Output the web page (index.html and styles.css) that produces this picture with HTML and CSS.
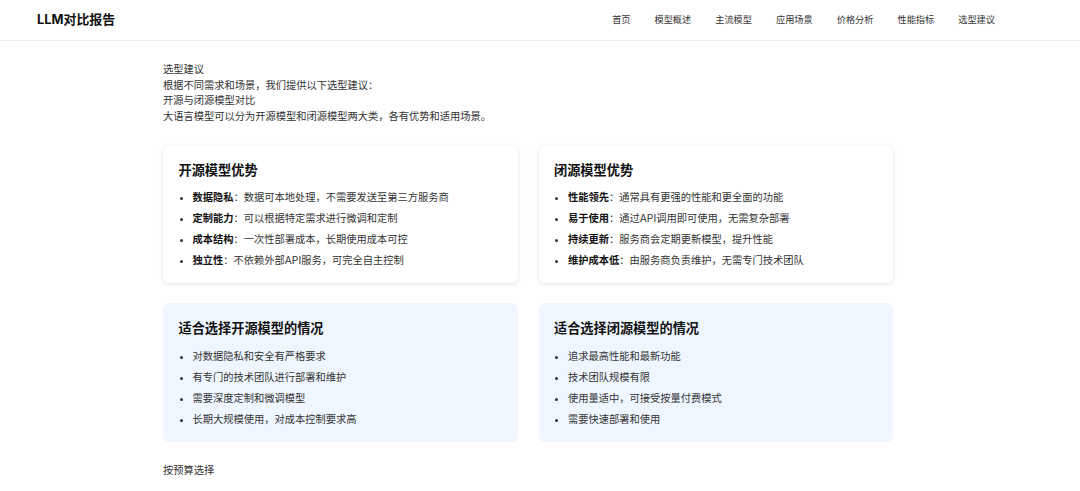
FILE: index.html
```html
<!DOCTYPE html>
<html lang="zh-CN">
<head>
<meta charset="utf-8">
<title>LLM对比报告</title>
<link rel="stylesheet" href="styles.css">
</head>
<body>
<header class="header">
  <div class="logo">LLM对比报告</div>
  <nav class="nav">
    <a href="#">首页</a>
    <a href="#">模型概述</a>
    <a href="#">主流模型</a>
    <a href="#">应用场景</a>
    <a href="#">价格分析</a>
    <a href="#">性能指标</a>
    <a href="#">选型建议</a>
  </nav>
</header>
<main class="main">
  <div class="intro">
    <p>选型建议</p>
    <p>根据不同需求和场景，我们提供以下选型建议：</p>
    <p>开源与闭源模型对比</p>
    <p>大语言模型可以分为开源模型和闭源模型两大类，各有优势和适用场景。</p>
  </div>
  <div class="grid">
    <section class="card">
      <h3 class="card-title">开源模型优势</h3>
      <ul class="list">
        <li><strong>数据隐私</strong>：数据可本地处理，不需要发送至第三方服务商</li>
        <li><strong>定制能力</strong>：可以根据特定需求进行微调和定制</li>
        <li><strong>成本结构</strong>：一次性部署成本，长期使用成本可控</li>
        <li><strong>独立性</strong>：不依赖外部API服务，可完全自主控制</li>
      </ul>
    </section>
    <section class="card">
      <h3 class="card-title">闭源模型优势</h3>
      <ul class="list">
        <li><strong>性能领先</strong>：通常具有更强的性能和更全面的功能</li>
        <li><strong>易于使用</strong>：通过API调用即可使用，无需复杂部署</li>
        <li><strong>持续更新</strong>：服务商会定期更新模型，提升性能</li>
        <li><strong>维护成本低</strong>：由服务商负责维护，无需专门技术团队</li>
      </ul>
    </section>
    <section class="card card-blue">
      <h3 class="card-title">适合选择开源模型的情况</h3>
      <ul class="list">
        <li>对数据隐私和安全有严格要求</li>
        <li>有专门的技术团队进行部署和维护</li>
        <li>需要深度定制和微调模型</li>
        <li>长期大规模使用，对成本控制要求高</li>
      </ul>
    </section>
    <section class="card card-blue">
      <h3 class="card-title">适合选择闭源模型的情况</h3>
      <ul class="list">
        <li>追求最高性能和最新功能</li>
        <li>技术团队规模有限</li>
        <li>使用量适中，可接受按量付费模式</li>
        <li>需要快速部署和使用</li>
      </ul>
    </section>
  </div>
  <p class="next">按预算选择</p>
</main>
</body>
</html>
```

FILE: styles.css
```css
* { box-sizing: border-box; }
html, body { margin: 0; padding: 0; }
body {
  font-family: "Inter", "Noto Sans CJK SC", sans-serif;
  font-size: 10.25px;
  color: #333;
  background: #fff;
}
.header {
  height: 41px;
  display: flex;
  align-items: center;
  justify-content: space-between;
  padding: 0 85px 0 37px;
  border-bottom: 1px solid #eeeeee;
}
.logo {
  font-size: 12.9px;
  font-weight: 700;
  color: #111;
  margin-top: -3px;
}
.nav {
  display: flex;
  gap: 24px;
  margin-top: -3px;
}
.nav a {
  font-size: 9.2px;
  color: #333;
  text-decoration: none;
}
.main {
  width: 730px;
  margin-left: 163px;
  padding-top: 21px;
}
.intro p {
  margin: 0;
  line-height: 15.7px;
}
.grid {
  display: grid;
  grid-template-columns: 1fr 1fr;
  gap: 20px 21px;
  margin-top: 21px;
}
.card {
  background: #fff;
  border-radius: 6px;
  box-shadow: 0 1px 4px rgba(0, 0, 0, 0.12);
  padding: 15px 15px 12px 15.5px;
}
.card-blue {
  background: #eff6ff;
  box-shadow: none;
  padding-top: 16px;
  padding-bottom: 12px;
}
.card-blue .card-title {
  margin-bottom: 9px;
}
.card-title {
  margin: 0 0 8px;
  font-size: 13.2px;
  line-height: 18px;
  font-weight: 700;
  color: #111;
}
.list {
  margin: 0;
  padding-left: 14px;
  list-style: disc;
}
.list li {
  line-height: 21px;
  color: #333;
}
.list strong {
  color: #111;
  font-weight: 700;
}
.next {
  margin: 21px 0 0;
  line-height: 15.7px;
}
```
